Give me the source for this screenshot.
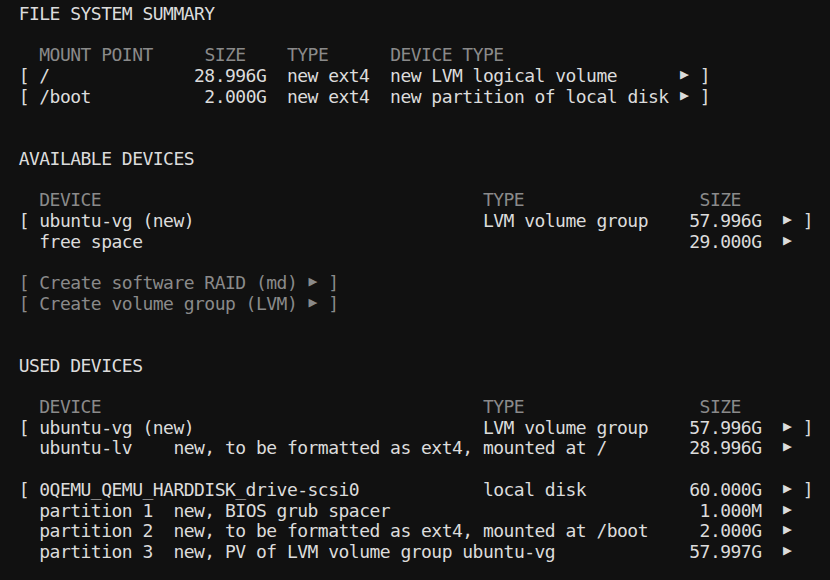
import type { ReactNode } from "react"

type Cell = { c: number; t?: string; arrow?: boolean }

// one terminal cell wide, small pointer triangle
function Arrow() {
  return (
    <span className="inline-block w-[10.33px] text-center text-[15px] align-[3px] leading-none">
      ▶
    </span>
  )
}

function Line({ cells = [], dim = false }: { cells?: Cell[]; dim?: boolean }) {
  const out: ReactNode[] = []
  let col = 0
  cells.forEach((cell, i) => {
    const gap = cell.c - col
    if (gap > 0) out.push(" ".repeat(gap))
    if (cell.arrow) {
      out.push(<Arrow key={i} />)
      col = cell.c + 1
    } else {
      out.push(<span key={i}>{cell.t}</span>)
      col = cell.c + (cell.t ?? "").length
    }
  })
  return (
    <div className={`h-[20.7px] whitespace-pre ${dim ? "text-[#8a8a8a]" : "text-[#dcdcdc]"}`}>
      {out.length ? out : " "}
    </div>
  )
}

const br = (c: number): Cell => ({ c, t: "]" })
const ar = (c: number): Cell => ({ c, arrow: true })

export default function App() {
  return (
    <div className="w-[830px] h-[580px] overflow-hidden bg-[#111111] pt-[4px] font-['DejaVu_Sans_Mono',monospace] text-[18px] leading-[20.7px] tracking-[-0.52px]">
      <div className="-ml-[2px]">
        {/* file system summary */}
        <Line cells={[{ c: 2, t: "FILE SYSTEM SUMMARY" }]} />
        <Line />
        <Line
          dim
          cells={[
            { c: 4, t: "MOUNT POINT" },
            { c: 20, t: "SIZE" },
            { c: 28, t: "TYPE" },
            { c: 38, t: "DEVICE TYPE" },
          ]}
        />
        <Line
          cells={[
            { c: 2, t: "[ /" },
            { c: 19, t: "28.996G" },
            { c: 28, t: "new ext4" },
            { c: 38, t: "new LVM logical volume" },
            ar(66),
            br(68),
          ]}
        />
        <Line
          cells={[
            { c: 2, t: "[ /boot" },
            { c: 20, t: "2.000G" },
            { c: 28, t: "new ext4" },
            { c: 38, t: "new partition of local disk" },
            ar(66),
            br(68),
          ]}
        />
        <Line />
        <Line />

        {/* available devices */}
        <Line cells={[{ c: 2, t: "AVAILABLE DEVICES" }]} />
        <Line />
        <Line
          dim
          cells={[
            { c: 4, t: "DEVICE" },
            { c: 47, t: "TYPE" },
            { c: 68, t: "SIZE" },
          ]}
        />
        <Line
          cells={[
            { c: 2, t: "[ ubuntu-vg (new)" },
            { c: 47, t: "LVM volume group" },
            { c: 67, t: "57.996G" },
            ar(76),
            br(78),
          ]}
        />
        <Line cells={[{ c: 4, t: "free space" }, { c: 67, t: "29.000G" }, ar(76)]} />
        <Line />
        <Line dim cells={[{ c: 2, t: "[ Create software RAID (md)" }, ar(30), br(32)]} />
        <Line dim cells={[{ c: 2, t: "[ Create volume group (LVM)" }, ar(30), br(32)]} />
        <Line />
        <Line />

        {/* used devices */}
        <Line cells={[{ c: 2, t: "USED DEVICES" }]} />
        <Line />
        <Line
          dim
          cells={[
            { c: 4, t: "DEVICE" },
            { c: 47, t: "TYPE" },
            { c: 68, t: "SIZE" },
          ]}
        />
        <Line
          cells={[
            { c: 2, t: "[ ubuntu-vg (new)" },
            { c: 47, t: "LVM volume group" },
            { c: 67, t: "57.996G" },
            ar(76),
            br(78),
          ]}
        />
        <Line
          cells={[
            { c: 4, t: "ubuntu-lv" },
            { c: 17, t: "new, to be formatted as ext4, mounted at /" },
            { c: 67, t: "28.996G" },
            ar(76),
          ]}
        />
        <Line />
        <Line
          cells={[
            { c: 2, t: "[ 0QEMU_QEMU_HARDDISK_drive-scsi0" },
            { c: 47, t: "local disk" },
            { c: 67, t: "60.000G" },
            ar(76),
            br(78),
          ]}
        />
        <Line
          cells={[
            { c: 4, t: "partition 1" },
            { c: 17, t: "new, BIOS grub spacer" },
            { c: 68, t: "1.000M" },
            ar(76),
          ]}
        />
        <Line
          cells={[
            { c: 4, t: "partition 2" },
            { c: 17, t: "new, to be formatted as ext4, mounted at /boot" },
            { c: 68, t: "2.000G" },
            ar(76),
          ]}
        />
        <Line
          cells={[
            { c: 4, t: "partition 3" },
            { c: 17, t: "new, PV of LVM volume group ubuntu-vg" },
            { c: 67, t: "57.997G" },
            ar(76),
          ]}
        />
      </div>
    </div>
  )
}
